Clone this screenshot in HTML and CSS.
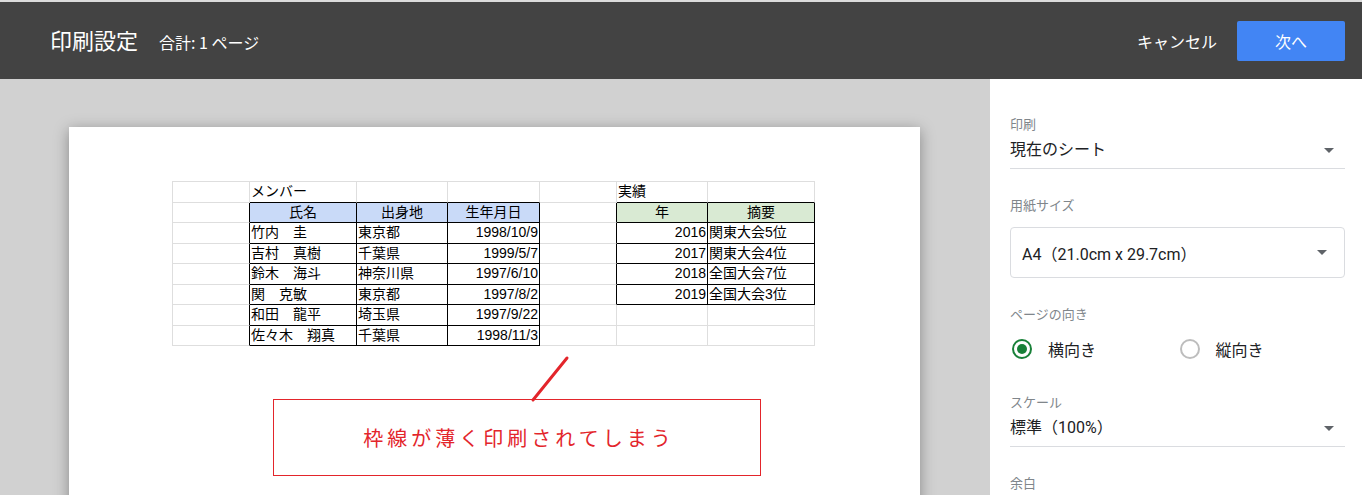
FILE: index.html
```html
<!DOCTYPE html>
<html lang="ja">
<head>
    <meta charset="UTF-8">
    <title>印刷設定</title>
    <link rel="stylesheet" href="styles.css">
</head>
<body>
    <header class="topbar">
        <div class="topbar-left">
            <h1 class="title">印刷設定</h1>
            <span class="total">合計: 1 ページ</span>
        </div>
        <div class="topbar-right">
            <button class="btn-cancel" type="button">キャンセル</button>
            <button class="btn-next" type="button">次へ</button>
        </div>
    </header>

    <div class="main">
        <div class="preview">
            <div class="paper">
                <table class="sheet">
                    <colgroup>
                        <col style="width:77px"><col style="width:107px"><col style="width:91px"><col style="width:92px">
                        <col style="width:77px"><col style="width:91px"><col style="width:107px">
                    </colgroup>
                    <tr>
                        <td></td><td class="bb">メンバー</td><td class="bb"></td><td class="bb"></td>
                        <td></td><td class="bb">実績</td><td class="bb"></td>
                    </tr>
                    <tr>
                        <td class="br"></td><td class="br bb head-blue c">氏名</td><td class="br bb head-blue c">出身地</td><td class="br bb head-blue c">生年月日</td>
                        <td class="br"></td><td class="br bb head-green c">年</td><td class="br bb head-green c">摘要</td>
                    </tr>
                    <tr>
                        <td class="br"></td><td class="br bb">竹内　圭</td><td class="br bb">東京都</td><td class="br bb r">1998/10/9</td>
                        <td class="br"></td><td class="br bb r">2016</td><td class="br bb">関東大会5位</td>
                    </tr>
                    <tr>
                        <td class="br"></td><td class="br bb">吉村　真樹</td><td class="br bb">千葉県</td><td class="br bb r">1999/5/7</td>
                        <td class="br"></td><td class="br bb r">2017</td><td class="br bb">関東大会4位</td>
                    </tr>
                    <tr>
                        <td class="br"></td><td class="br bb">鈴木　海斗</td><td class="br bb">神奈川県</td><td class="br bb r">1997/6/10</td>
                        <td class="br"></td><td class="br bb r">2018</td><td class="br bb">全国大会7位</td>
                    </tr>
                    <tr>
                        <td class="br"></td><td class="br bb">関　克敏</td><td class="br bb">東京都</td><td class="br bb r">1997/8/2</td>
                        <td class="br"></td><td class="br bb r">2019</td><td class="br bb">全国大会3位</td>
                    </tr>
                    <tr>
                        <td class="br"></td><td class="br bb">和田　龍平</td><td class="br bb">埼玉県</td><td class="br bb r">1997/9/22</td>
                        <td></td><td></td><td></td>
                    </tr>
                    <tr>
                        <td class="br"></td><td class="br bb">佐々木　翔真</td><td class="br bb">千葉県</td><td class="br bb r">1998/11/3</td>
                        <td></td><td></td><td></td>
                    </tr>
                </table>

                <svg class="pointer" width="44" height="50" viewBox="0 0 44 50">
                    <line x1="37" y1="4" x2="3" y2="46" stroke="#e3252b" stroke-width="3" stroke-linecap="round"/>
                </svg>

                <div class="callout">枠線が薄く印刷されてしまう</div>
            </div>
        </div>

        <aside class="panel">
            <div class="field">
                <div class="label">印刷</div>
                <div class="select">
                    <span>現在のシート</span>
                    <span class="arrow"></span>
                </div>
            </div>
            <div class="field">
                <div class="label">用紙サイズ</div>
                <div class="select-box">
                    <span>A4（21.0cm x 29.7cm）</span>
                    <span class="arrow"></span>
                </div>
            </div>
            <div class="field field-radios">
                <div class="label">ページの向き</div>
                <div class="radios">
                    <label class="radio"><span class="dot checked"></span>横向き</label>
                    <label class="radio"><span class="dot"></span>縦向き</label>
                </div>
            </div>
            <div class="field">
                <div class="label">スケール</div>
                <div class="select">
                    <span>標準（100%）</span>
                    <span class="arrow"></span>
                </div>
            </div>
            <div class="field">
                <div class="label">余白</div>
            </div>
        </aside>
    </div>
</body>
</html>
```

FILE: styles.css
```css
body {
    margin: 0;
    font-family: Roboto, "Noto Sans CJK JP", sans-serif;
    border-top: 2px solid #dcdcdc;
    height: 493px;
    overflow: hidden;
    display: flex;
    flex-direction: column;
}
.topbar {
    height: 77px;
    flex-shrink: 0;
    background: #434343;
    display: flex;
    align-items: center;
    justify-content: space-between;
    padding: 0 17px 0 50px;
}
.topbar-left {
    display: flex;
    align-items: baseline;
    gap: 21px;
    margin-top: -4px;
}
.title {
    margin: 0;
    font-family: "Noto Sans CJK JP", sans-serif;
    font-size: 22px;
    font-weight: 400;
    color: #fff;
}
.total {
    font-family: "Noto Sans CJK JP", sans-serif;
    font-size: 16px;
    color: #fff;
}
.topbar-right {
    display: flex;
    align-items: center;
    gap: 20px;
}
.btn-cancel {
    background: none;
    border: none;
    color: #fff;
    font-family: "Noto Sans CJK JP", sans-serif;
    font-size: 16px;
    padding: 0;
}
.btn-next {
    width: 108px;
    height: 40px;
    background: #4285f4;
    border: none;
    border-radius: 2px;
    color: #fff;
    font-family: "Noto Sans CJK JP", sans-serif;
    font-size: 16px;
}
.main {
    flex: 1;
    display: flex;
    min-height: 0;
}
.preview {
    flex: 1;
    background: #d1d1d1;
    padding: 48px 0 0 69px;
    overflow: hidden;
}
.paper {
    position: relative;
    width: 851px;
    height: 600px;
    background: #fff;
    box-shadow: 0 3px 14px rgba(0, 0, 0, 0.35);
    padding: 54px 0 0 103px;
    box-sizing: border-box;
}
.sheet {
    border-collapse: separate;
    border-spacing: 0;
    table-layout: fixed;
    width: 642px;
    border-top: 1px solid #dedede;
    border-left: 1px solid #dedede;
    font-family: "Liberation Sans", "Noto Sans CJK JP", sans-serif;
    font-size: 14px;
    color: #000;
}
.sheet td {
    height: 19.5px;
    padding: 0 1px;
    border-right: 1px solid #dedede;
    border-bottom: 1px solid #dedede;
    white-space: nowrap;
    line-height: 19px;
    overflow: hidden;
}
.sheet td.br {
    border-right-color: #000;
}
.sheet td.bb {
    border-bottom-color: #000;
}
.sheet td.c {
    text-align: center;
}
.sheet td.r {
    text-align: right;
}
.head-blue {
    background: #c9daf8;
}
.head-green {
    background: #d9ead3;
}
.pointer {
    position: absolute;
    left: 461px;
    top: 227px;
}
.callout {
    box-sizing: border-box;
    width: 488px;
    height: 77px;
    margin: 53px 0 0 101px;
    padding-left: 4px;
    border: 1px solid #e3252b;
    display: flex;
    align-items: center;
    justify-content: center;
    font-family: "Noto Sans CJK JP", sans-serif;
    font-size: 20px;
    letter-spacing: 4px;
    color: #e3252b;
}
.panel {
    width: 335px;
    flex-shrink: 0;
    background: #fff;
    padding: 37px 17px 0 20px;
    color: #202124;
}
.field {
    margin-bottom: 28px;
}
.field-radios {
    margin-bottom: 33px;
}
.label {
    font-family: "Noto Sans CJK JP", sans-serif;
    font-size: 13px;
    line-height: 16px;
    color: #80868b;
}
.select {
    margin-top: 6px;
    padding-bottom: 6px;
    border-bottom: 1px solid #dadce0;
    display: flex;
    align-items: center;
    justify-content: space-between;
    font-size: 16px;
    line-height: 24px;
}
.select-box {
    margin-top: 14px;
    height: 49px;
    border: 1px solid #dadce0;
    border-radius: 4px;
    padding: 0 0 0 11px;
    display: flex;
    align-items: center;
    justify-content: space-between;
    font-size: 16px;
}
.arrow {
    width: 0;
    height: 0;
    border-left: 5px solid transparent;
    border-right: 5px solid transparent;
    border-top: 5px solid #5f6368;
    margin-right: 11px;
}
.select-box .arrow {
    margin-right: 17px;
}
.radios {
    margin-top: 15px;
    display: flex;
    height: 24px;
    align-items: center;
}
.radio {
    width: 168px;
    display: flex;
    align-items: center;
    gap: 16px;
    font-size: 16px;
}
.dot {
    width: 16px;
    height: 16px;
    margin-left: 2px;
    border: 2px solid #bdbdbd;
    border-radius: 50%;
    box-sizing: content-box;
    position: relative;
}
.dot.checked {
    border-color: #188038;
}
.dot.checked::after {
    content: "";
    position: absolute;
    left: 3px;
    top: 3px;
    width: 10px;
    height: 10px;
    border-radius: 50%;
    background: #188038;
}
```
